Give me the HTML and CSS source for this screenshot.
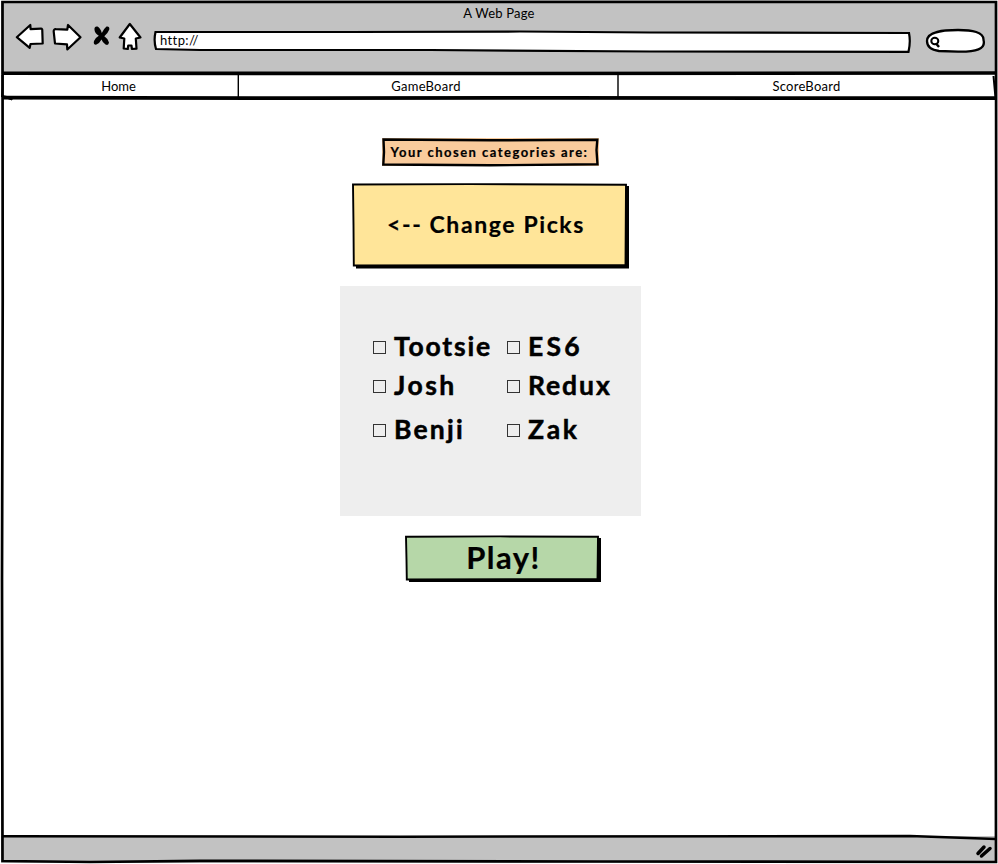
FILE: index.html
```html
<!DOCTYPE html>
<html lang="en">
<head>
<meta charset="utf-8">
<title>A Web Page</title>
<link rel="stylesheet" href="styles.css">
</head>
<body>
<div class="window">
  <header class="toolbar">
    <div class="title"><span>A Web Page</span></div>
    <div class="controls">
      <svg class="icons" width="128" height="32" viewBox="15 21 128 32">
        <g fill="#fff" stroke="#000" stroke-width="2.200" stroke-linejoin="round">
          <path d="M16.800 37.200L30.300 25L30.600 29.200L41 28.600Q42.500 28.600 42.300 31L42.700 43.500L30.500 44L29.700 47.800Z"/>
          <path d="M80.500 37.200L68 25L67.300 29.700L56 29.200Q53.500 29 53.700 31.500L55 43.500L67 44.300L67.300 49.500Z"/>
          <path d="M129.800 24L119.700 37.500L124.300 38.500L123.700 48.500L127.800 49L128.200 45.500L131.500 45.500L131.900 49L136.500 48.700L135.800 38.500L140.500 37.500Z"/>
        </g>
        <path d="M94.500 30Q94 26 97.500 26.500Q100.500 28 101.800 33Q103.500 29 106.500 26.500Q109.800 26 109.300 29.500Q107.500 34 104.300 36.200Q108 38.500 109 42.500Q108.500 46 105.500 44.500Q102.500 42.500 101.500 39.500Q99.500 43.500 96 44.800Q93 44.500 94 41Q95.500 37.500 98.800 35.700Q95 33.500 94.500 30Z"/>
      </svg>
      <div class="address">
        <svg width="760" height="25" viewBox="152 29 760 25"><path d="M155.500 32L350 32L520 31.500L650 32.500L909 33Q910.800 42 908.500 51.800L650 51.500L430 50L200 50L156 49Q153.500 41 155.500 32Z" fill="#fff" stroke="#000" stroke-width="2.200"/></svg>
        <span>http://</span>
      </div>
      <svg class="search" width="62" height="27" viewBox="924 27 62 27">
        <path d="M927 41C927 31 944 30 958 30C972 30 984 32 983.500 40C986 49 976 52 958 51.700L939 51C931 50 927 47 927 41Z" fill="#fff" stroke="#000" stroke-width="2.300"/>
        <ellipse cx="934.800" cy="41" rx="3.500" ry="3.200" fill="none" stroke="#000" stroke-width="2"/>
        <path d="M936 43.500L939 47" stroke="#000" stroke-width="2.500"/>
      </svg>
    </div>
  </header>
  <nav class="tabs">
    <a class="tab"><span>Home</span></a>
    <a class="tab"><span class="wide">GameBoard</span></a>
    <a class="tab"><span class="wide">ScoreBoard</span></a>
  </nav>
  <main class="page">
    <div class="caption">
      <svg width="217" height="29" viewBox="382 138 217 29"><path d="M382 138H599V166H382Z" fill="#f9cb9c"/><path d="M383.500 139.500L490 140.300L597.300 139.800L596.500 150L597.500 164.300L490 165.300L383.300 164.500L384 152Z" fill="#f9cb9c" stroke="#000" stroke-width="2.400"/></svg>
      <span>Your chosen categories are:</span>
    </div>
    <div class="btn change">
      <svg width="278" height="86" viewBox="352 183 278 86"><path d="M356 186H629V268.500H356Z"/><path d="M353 184.500L470 184.100L626 184.800L625.500 265L353.800 265.500L353.500 225Z" fill="#ffe599" stroke="#000" stroke-width="1.900"/></svg>
      <span>&lt;-- Change Picks</span>
    </div>
    <div class="picks">
      <label><i></i><span class="tootsie">Tootsie</span></label><label><i></i><span class="es6">ES6</span></label>
      <label><i></i><span class="josh">Josh</span></label><label><i></i><span class="redux">Redux</span></label>
      <label><i></i><span class="benji">Benji</span></label><label><i></i><span class="zak">Zak</span></label>
    </div>
    <div class="btn play">
      <svg width="197" height="48" viewBox="405 535 197 48"><path d="M409 538H601V582H409Z"/><path d="M406 536.800L500 536.400L598 536.800L597.500 579L406.800 579.500L406.500 560Z" fill="#b6d7a8" stroke="#000" stroke-width="1.900"/></svg>
      <span>Play!</span>
    </div>
  </main>
  <footer class="status"></footer>
  <svg class="frame" width="998" height="864" viewBox="0 0 998 864" fill="none" stroke="#000">
    <path d="M2.500 2L400 1.800L996 2L996.300 300L995.700 600L996 862L600 861.500L200 860.800L90 862L2.500 861L2 580L2.700 300Z" stroke-width="2.700"/>
    <path d="M2 73.300L500 73.500L996 73" stroke-width="3.600"/>
    <path d="M2 97.600L300 98.200L560 97.900L996 98.200" stroke-width="3.800"/>
    <path d="M2 95.500L12 97.500V100L3 97Z" fill="#000"/>
    <path d="M2.500 75L2.500 87L2 97M993.500 76L995.500 98" stroke-width="2"/>
    <path d="M238.300 75V97M618 74V99" stroke-width="1.400"/>
    <path d="M3 836.300L400 836.700L910 836L996 839" stroke-width="2.500"/>
    <path d="M978 853.500L984 847M981.500 856L990 848.500" stroke-width="3.500" stroke-linecap="round"/>
  </svg>
</div>
</body>
</html>
```
FILE: styles.css
```css
* { box-sizing: border-box; }
body { margin: 0; background: #fff; color: #000; font: 13px/16px Lato, "Noto Sans", sans-serif; }
span { white-space: nowrap; }
svg { display: block; }
.window { position: relative; width: 998px; height: 864px; display: grid; grid-template-rows: 73px 26px 1fr 27px; padding: 1px; overflow: hidden; }
.frame { position: absolute; inset: 0; pointer-events: none; }
.toolbar { background: #c2c2c2; }
.title { height: 20px; padding-top: 4px; text-align: center; }
.title span { letter-spacing: .2px; }
.controls { display: flex; padding-left: 14px; }
.address { display: grid; width: 760px; margin: 8px 0 0 9px; }
.address > * { grid-area: 1 / 1; }
.address span { padding: 3px 0 0 8px; letter-spacing: .4px; }
.search { margin: 6px 0 0 12px; }
.tabs { display: grid; grid-template-columns: 235px 380px 1fr; }
.tab { text-align: center; padding-top: 4px; }
.wide { letter-spacing: .25px; }
.page { display: flex; flex-direction: column; align-items: center; padding-top: 38px; padding-right: 17px; }
.caption, .btn { display: grid; font-weight: 700; place-items: center; -webkit-text-stroke: .2px #000; }
.caption > *, .btn > * { grid-area: 1 / 1; }
.caption { letter-spacing: 1.480px; }
.caption span { margin: 0 2px 2px 0; }
.change { margin-top: 16px; font-size: 23px; letter-spacing: 1.600px; }
.change span { margin: 0 9px 4px 0; }
.picks { width: 301px; height: 230px; margin-top: 17px; background: #eee; padding: 41px 0 0 33px; display: grid; grid-template-columns: 134px 1fr; grid-template-rows: 39px 40px 48px; }
.picks label { display: flex; align-items: center; gap: 8px; height: 40px; font-size: 26.500px; line-height: 38px; font-weight: 700; -webkit-text-stroke: .5px #000; }
.picks span { margin-bottom: 2px; }
.picks i { width: 13px; height: 13px; border: 1px solid #333; }
.picks label:nth-child(n+5) { margin-top: 4px; }
.tootsie { letter-spacing: 1.800px; }
.es6 { letter-spacing: 3.200px; }
.josh { letter-spacing: 2.500px; }
.redux { letter-spacing: 1.900px; }
.benji { letter-spacing: 2.200px; }
.zak { letter-spacing: 2.700px; }
.play { margin: 19px 0 0 25px; font-size: 31px; letter-spacing: 1.500px; }
.play span { margin: 0 0 4px 1px; }
.status { background: #c2c2c2; }
```
